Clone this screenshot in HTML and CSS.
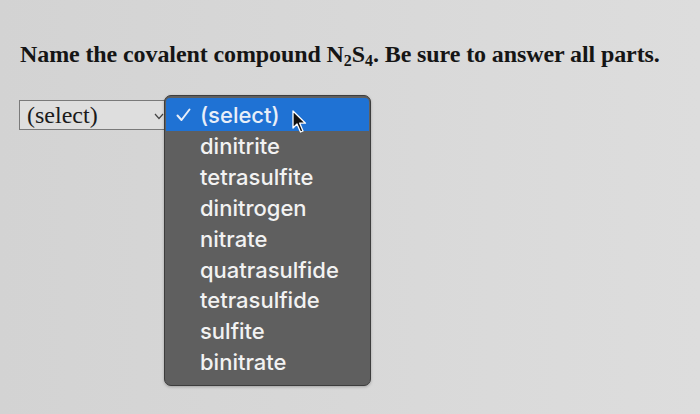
FILE: index.html
```html
<!DOCTYPE html>
<html>
<head>
<meta charset="utf-8">
<link rel="stylesheet" href="styles.css">
</head>
<body>
<div class="page">
  <h1 class="title">Name the covalent compound N<sub>2</sub>S<sub>4</sub>. Be sure to answer all parts.</h1>
  <div class="field">
    <div class="select">
      <span class="select-text">(select)</span>
      <svg class="chev" width="10" height="7" viewBox="0 0 10 7"><path d="M1 1 L5 5.5 L9 1" fill="none" stroke="#444" stroke-width="1.2"/></svg>
    </div>
    <div class="menu">
      <div class="opt active">
        <svg class="check" width="15" height="14" viewBox="0 0 15 14"><path d="M1.5 7.5 L5.5 12 L13.5 1.5" fill="none" stroke="#e8eef8" stroke-width="2" stroke-linecap="round" stroke-linejoin="round"/></svg>
        <span>(select)</span>
      </div>
      <div class="opt"><span>dinitrite</span></div>
      <div class="opt"><span>tetrasulfite</span></div>
      <div class="opt"><span>dinitrogen</span></div>
      <div class="opt"><span>nitrate</span></div>
      <div class="opt"><span>quatrasulfide</span></div>
      <div class="opt"><span>tetrasulfide</span></div>
      <div class="opt"><span>sulfite</span></div>
      <div class="opt"><span>binitrate</span></div>
      <svg class="cursor" width="16" height="24" viewBox="0 0 16 24"><path d="M1 1 L1 18 L5 14 L8.5 22 L11 21 L7.7 13.2 L13.5 13.2 Z" fill="#111" stroke="#fff" stroke-width="1.3" stroke-linejoin="round"/></svg>
    </div>
  </div>
</div>
</body>
</html>
```

FILE: styles.css
```css
html, body {
  margin: 0;
  padding: 0;
}
body {
  width: 700px;
  height: 414px;
  overflow: hidden;
  background: linear-gradient(90deg, #d3d3d3 0%, #d8d8d8 50%, #dddddd 100%);
}
.page {
  padding: 39px 0 0 20px;
}
.title {
  margin: 0;
  font-family: "Liberation Serif", serif;
  font-weight: bold;
  font-size: 24px;
  line-height: 30px;
  color: #151515;
  letter-spacing: -0.1px;
}
.title sub {
  font-size: 16px;
  line-height: 0;
  vertical-align: -4px;
}
.field {
  position: relative;
  margin-top: 31px;
}
.select {
  width: 144px;
  height: 28px;
  border: 1px solid #7a7a7a;
  background: #dedede;
  display: flex;
  align-items: center;
  box-sizing: content-box;
  margin-left: -1px;
}
.select-text {
  font-family: "Liberation Serif", serif;
  font-size: 24px;
  color: #1a1a1a;
  padding-left: 7px;
  flex: 1;
}
.chev {
  margin-right: 0;
  margin-top: 2px;
}
.menu {
  position: absolute;
  left: 144px;
  top: -5px;
  width: 203px;
  padding: 2px 1px 8px;
  background: #5f5f5f;
  border: 1px solid #3d3d3d;
  border-radius: 7px;
  box-shadow: 0 1px 3px rgba(0,0,0,0.25);
}
.opt {
  height: 30.8px;
  display: flex;
  align-items: center;
  padding-left: 34px;
  position: relative;
  font-family: Inter, "Noto Sans", sans-serif;
  font-weight: 500;
  font-size: 22px;
  color: #f2f2f2;
}
.opt.active {
  background: #1f72d4;
  height: 33px;
  border-radius: 4px 4px 0 0;
  color: #e8eef8;
}
.check {
  position: absolute;
  left: 10px;
  top: 10px;
}
.cursor {
  position: absolute;
  left: 127px;
  top: 14px;
}
```
